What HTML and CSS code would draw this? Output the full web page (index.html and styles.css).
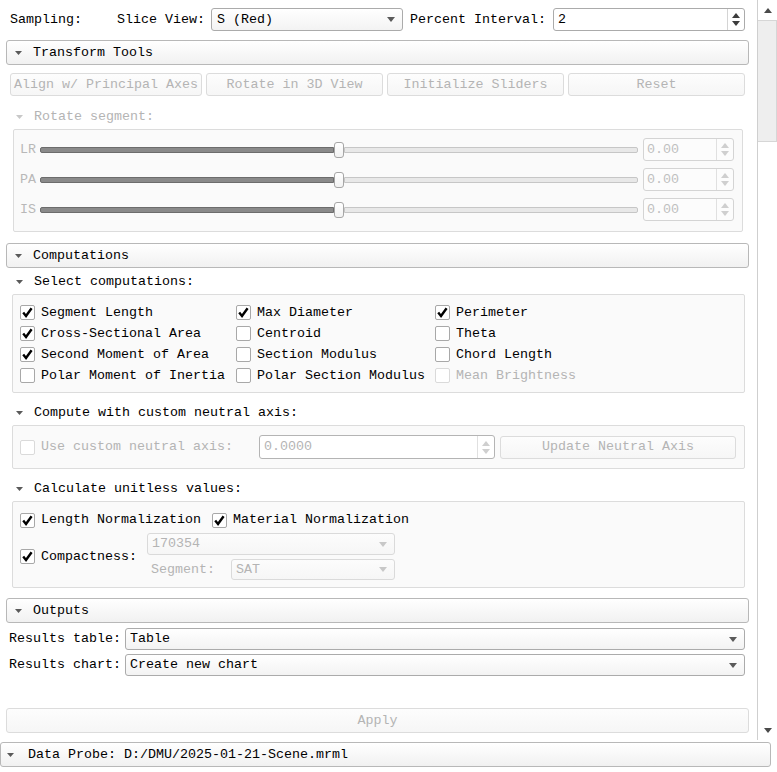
FILE: index.html
```html
<!DOCTYPE html>
<html lang="en">
<head>
    <meta charset="UTF-8">
    <title>Cross-Section Analysis</title>
    <link rel="stylesheet" href="styles.css">
</head>
<body>
    <div class="window">
        <div class="main">
            <div class="panel">
                <!-- Sampling row -->
                <div class="top-row">
                    <span class="sampling">Sampling:</span>
                    <span>Slice View:</span>
                    <div class="combo slice-combo">
                        <span>S (Red)</span>
                        <svg class="tri combo-arrow" width="8" height="5" viewBox="0 0 8 5"><path d="M0 0H8L4 5Z"/></svg>
                    </div>
                    <span class="interval-label">Percent Interval:</span>
                    <div class="spin interval-spin">
                        <span>2</span>
                        <div class="spin-buttons">
                            <svg width="8" height="5" viewBox="0 0 8 5"><path d="M0 5H8L4 0Z"/></svg>
                            <svg width="8" height="5" viewBox="0 0 8 5"><path d="M0 0H8L4 5Z"/></svg>
                        </div>
                    </div>
                </div>

                <!-- Transform Tools -->
                <div class="section-header">
                    <svg class="tri" width="7" height="4" viewBox="0 0 7 4"><path d="M0 0H7L3.5 4Z"/></svg>
                    <span>Transform Tools</span>
                </div>
                <div class="button-row">
                    <div class="button disabled first">Align w/ Principal Axes</div>
                    <div class="button disabled">Rotate in 3D View</div>
                    <div class="button disabled">Initialize Sliders</div>
                    <div class="button disabled">Reset</div>
                </div>
                <div class="sub-header disabled rotate-header">
                    <svg class="tri" width="7" height="4" viewBox="0 0 7 4"><path d="M0 0H7L3.5 4Z"/></svg>
                    <span>Rotate segment:</span>
                </div>
                <div class="group rotate-group">
                    <div class="slider-row">
                        <span class="slider-label">LR</span>
                        <div class="slider"><div class="fill"></div><div class="handle"></div><div class="rest"></div></div>
                        <div class="spin value-spin">
                            <span>0.00</span>
                            <div class="spin-buttons">
                                <svg width="8" height="5" viewBox="0 0 8 5"><path d="M0 5H8L4 0Z"/></svg>
                                <svg width="8" height="5" viewBox="0 0 8 5"><path d="M0 0H8L4 5Z"/></svg>
                            </div>
                        </div>
                    </div>
                    <div class="slider-row">
                        <span class="slider-label">PA</span>
                        <div class="slider"><div class="fill"></div><div class="handle"></div><div class="rest"></div></div>
                        <div class="spin value-spin">
                            <span>0.00</span>
                            <div class="spin-buttons">
                                <svg width="8" height="5" viewBox="0 0 8 5"><path d="M0 5H8L4 0Z"/></svg>
                                <svg width="8" height="5" viewBox="0 0 8 5"><path d="M0 0H8L4 5Z"/></svg>
                            </div>
                        </div>
                    </div>
                    <div class="slider-row">
                        <span class="slider-label">IS</span>
                        <div class="slider"><div class="fill"></div><div class="handle"></div><div class="rest"></div></div>
                        <div class="spin value-spin">
                            <span>0.00</span>
                            <div class="spin-buttons">
                                <svg width="8" height="5" viewBox="0 0 8 5"><path d="M0 5H8L4 0Z"/></svg>
                                <svg width="8" height="5" viewBox="0 0 8 5"><path d="M0 0H8L4 5Z"/></svg>
                            </div>
                        </div>
                    </div>
                </div>

                <!-- Computations -->
                <div class="section-header computations-header">
                    <svg class="tri" width="7" height="4" viewBox="0 0 7 4"><path d="M0 0H7L3.5 4Z"/></svg>
                    <span>Computations</span>
                </div>
                <div class="sub-header">
                    <svg class="tri" width="7" height="4" viewBox="0 0 7 4"><path d="M0 0H7L3.5 4Z"/></svg>
                    <span>Select computations:</span>
                </div>
                <div class="group wide-group check-grid">
                    <label class="check"><span class="box checked"></span>Segment Length</label>
                    <label class="check"><span class="box checked"></span>Max Diameter</label>
                    <label class="check"><span class="box checked"></span>Perimeter</label>
                    <label class="check"><span class="box checked"></span>Cross-Sectional Area</label>
                    <label class="check"><span class="box"></span>Centroid</label>
                    <label class="check"><span class="box"></span>Theta</label>
                    <label class="check"><span class="box checked"></span>Second Moment of Area</label>
                    <label class="check"><span class="box"></span>Section Modulus</label>
                    <label class="check"><span class="box"></span>Chord Length</label>
                    <label class="check"><span class="box"></span>Polar Moment of Inertia</label>
                    <label class="check"><span class="box"></span>Polar Section Modulus</label>
                    <label class="check disabled"><span class="box"></span>Mean Brightness</label>
                </div>

                <div class="sub-header">
                    <svg class="tri" width="7" height="4" viewBox="0 0 7 4"><path d="M0 0H7L3.5 4Z"/></svg>
                    <span>Compute with custom neutral axis:</span>
                </div>
                <div class="group wide-group axis-group">
                    <label class="check disabled axis-check"><span class="box"></span>Use custom neutral axis:</label>
                    <div class="spin axis-spin">
                        <span>0.0000</span>
                        <div class="spin-buttons">
                            <svg width="8" height="5" viewBox="0 0 8 5"><path d="M0 5H8L4 0Z"/></svg>
                            <svg width="8" height="5" viewBox="0 0 8 5"><path d="M0 0H8L4 5Z"/></svg>
                        </div>
                    </div>
                    <div class="button disabled axis-button">Update Neutral Axis</div>
                </div>

                <div class="sub-header">
                    <svg class="tri" width="7" height="4" viewBox="0 0 7 4"><path d="M0 0H7L3.5 4Z"/></svg>
                    <span>Calculate unitless values:</span>
                </div>
                <div class="group wide-group unitless-group">
                    <div class="norm-row">
                        <label class="check"><span class="box checked"></span>Length Normalization</label>
                        <label class="check"><span class="box checked"></span>Material Normalization</label>
                    </div>
                    <div class="compact-row">
                        <label class="check"><span class="box checked"></span>Compactness:</label>
                        <div class="compact-fields">
                            <div class="combo disabled volume-combo">
                                <span>170354</span>
                                <svg class="tri combo-arrow" width="8" height="5" viewBox="0 0 8 5"><path d="M0 0H8L4 5Z"/></svg>
                            </div>
                            <div class="segment-row">
                                <span class="segment-label">Segment:</span>
                                <div class="combo disabled segment-combo">
                                    <span>SAT</span>
                                    <svg class="tri combo-arrow" width="8" height="5" viewBox="0 0 8 5"><path d="M0 0H8L4 5Z"/></svg>
                                </div>
                            </div>
                        </div>
                    </div>
                </div>

                <!-- Outputs -->
                <div class="section-header outputs-header">
                    <svg class="tri" width="7" height="4" viewBox="0 0 7 4"><path d="M0 0H7L3.5 4Z"/></svg>
                    <span>Outputs</span>
                </div>
                <div class="output-row">
                    <span class="output-label">Results table:</span>
                    <div class="combo output-combo">
                        <span>Table</span>
                        <svg class="tri combo-arrow" width="8" height="5" viewBox="0 0 8 5"><path d="M0 0H8L4 5Z"/></svg>
                    </div>
                </div>
                <div class="output-row">
                    <span class="output-label">Results chart:</span>
                    <div class="combo output-combo">
                        <span>Create new chart</span>
                        <svg class="tri combo-arrow" width="8" height="5" viewBox="0 0 8 5"><path d="M0 0H8L4 5Z"/></svg>
                    </div>
                </div>

                <div class="button disabled apply">Apply</div>
            </div>

            <div class="scrollbar">
                <div class="scroll-arrow">
                    <svg width="8" height="5" viewBox="0 0 8 5"><path d="M0 5H8L4 0Z"/></svg>
                </div>
                <div class="thumb"></div>
                <div class="track"></div>
                <div class="scroll-arrow">
                    <svg width="8" height="5" viewBox="0 0 8 5"><path d="M0 0H8L4 5Z"/></svg>
                </div>
            </div>
        </div>

        <div class="section-header probe">
            <svg class="tri" width="7" height="4" viewBox="0 0 7 4"><path d="M0 0H7L3.5 4Z"/></svg>
            <span>Data Probe: D:/DMU/2025-01-21-Scene.mrml</span>
        </div>
    </div>
</body>
</html>
```

FILE: styles.css
```css
body {
    margin: 0;
    background-color: #ffffff;
    color: #000000;
    font-family: "Liberation Mono", "DejaVu Sans Mono", monospace;
    font-size: 13.33px;
    line-height: 16px;
}
.window {
    width: 777px;
    height: 772px;
    display: flex;
    flex-direction: column;
}
.main {
    display: flex;
    height: 740px;
}
.panel {
    width: 757px;
    padding: 0 8px 0 6px;
    box-sizing: border-box;
}

/* shared widgets */
.tri {
    fill: #5a5a5a;
    flex-shrink: 0;
}
.disabled {
    color: #b4b4b4;
}
.disabled .tri {
    fill: #c8c8c8;
}
.combo {
    display: flex;
    align-items: center;
    box-sizing: border-box;
    height: 23px;
    padding-left: 4px;
    border: 1px solid #ababab;
    border-radius: 3px;
    background: linear-gradient(#ffffff, #f3f3f3);
}
.combo-arrow {
    margin-left: auto;
    margin-right: 7px;
}
.combo.disabled {
    border-color: #dadada;
    background: linear-gradient(#fcfcfc, #f6f6f6);
}
.spin {
    display: flex;
    align-items: center;
    box-sizing: border-box;
    height: 23px;
    padding-left: 4px;
    border: 1px solid #ababab;
    border-radius: 3px;
    background-color: #ffffff;
}
.spin-buttons {
    margin-left: auto;
    width: 16px;
    align-self: stretch;
    border-left: 1px solid #d4d4d4;
    display: flex;
    flex-direction: column;
    justify-content: center;
    align-items: center;
    gap: 3px;
    fill: #3c3c3c;
}
.button {
    display: flex;
    align-items: center;
    justify-content: center;
    box-sizing: border-box;
    height: 23px;
    border: 1px solid #ababab;
    border-radius: 3px;
    background: linear-gradient(#ffffff, #f3f3f3);
}
.button.disabled {
    border-color: #dcdcdc;
    background: linear-gradient(#fdfdfd, #f6f6f6);
}
.section-header {
    display: flex;
    align-items: center;
    gap: 11px;
    box-sizing: border-box;
    height: 25px;
    padding-left: 8px;
    border: 1px solid #b8b8b8;
    border-radius: 3px;
    background: linear-gradient(#ffffff, #f1f1f1);
}
.sub-header {
    display: flex;
    align-items: center;
    gap: 11px;
    height: 16px;
    padding-left: 10px;
}
.group {
    box-sizing: border-box;
    border: 1px solid #dcdcdc;
    border-radius: 2px;
    background-color: #fafafa;
}
.wide-group {
    margin: 4px 4px 0 6px;
}
.check {
    display: flex;
    align-items: center;
    gap: 6px;
    white-space: nowrap;
}
.box {
    width: 15px;
    height: 15px;
    box-sizing: border-box;
    border: 1px solid #a8a8a8;
    border-radius: 2px;
    background-color: #ffffff;
    flex-shrink: 0;
}
.box.checked {
    background: #ffffff url("data:image/svg+xml,%3Csvg xmlns='http://www.w3.org/2000/svg' width='13' height='13' viewBox='0 0 13 13'%3E%3Cpath d='M2.2 6.6L5 10L10.6 2.2' fill='none' stroke='%23000' stroke-width='2.4'/%3E%3C/svg%3E") center no-repeat;
}
.check.disabled .box {
    border-color: #dadada;
}

/* sampling row */
.top-row {
    display: flex;
    align-items: center;
    gap: 6px;
    height: 23px;
    margin-top: 8px;
}
.sampling {
    margin-left: 4px;
    margin-right: 29px;
}
.slice-combo {
    width: 192px;
    padding-left: 5px;
}
.interval-label {
    margin-left: 1px;
    margin-right: 1px;
}
.interval-spin {
    width: 192px;
}

/* transform tools */
.top-row + .section-header {
    margin-top: 9px;
}
.button-row {
    display: flex;
    gap: 4px;
    padding: 0 4px;
    margin-top: 8px;
}
.button-row .button {
    flex: 1;
}
.button-row .first {
    flex: 0 0 192px;
}
.rotate-header {
    margin-top: 13px;
}
.rotate-group {
    margin: 4px 6px 0 7px;
    padding: 8px 8px 10px 6px;
    display: flex;
    flex-direction: column;
    gap: 7px;
}
.slider-row {
    display: flex;
    align-items: center;
    height: 23px;
}
.slider-label {
    width: 16px;
    color: #b8b8b8;
}
.slider {
    flex: 1;
    display: flex;
    align-items: center;
    height: 16px;
    margin: 0 5px 0 4px;
}
.fill {
    flex: 1;
    height: 4px;
    background-color: #8a8a8a;
    border: 1px solid #6c6c6c;
    border-radius: 2px 0 0 2px;
}
.rest {
    flex: 1;
    height: 4px;
    background-color: #e8e8e8;
    border: 1px solid #c6c6c6;
    border-radius: 0 2px 2px 0;
}
.handle {
    width: 10px;
    height: 16px;
    box-sizing: border-box;
    border: 1px solid #a6a6a6;
    border-radius: 3px;
    background: linear-gradient(#ffffff, #f2f2f2);
}
.value-spin {
    width: 91px;
    border-color: #d4d4d4;
    background-color: #fcfcfc;
    color: #c0c0c0;
    padding-left: 3px;
}
.value-spin .spin-buttons,
.axis-spin .spin-buttons {
    fill: #cfcfcf;
    border-left-color: #e0e0e0;
}

/* computations */
.computations-header {
    margin-top: 11px;
}
.computations-header + .sub-header {
    margin-top: 6px;
}
.check-grid {
    display: grid;
    grid-template-columns: 216px 199px 1fr;
    grid-auto-rows: 21px;
    align-items: center;
    padding: 7px 0 6px 7px;
}
.check-grid + .sub-header,
.axis-group + .sub-header {
    margin-top: 12px;
}
.axis-group {
    display: flex;
    align-items: center;
    height: 44px;
    padding: 0 8px 0 7px;
}
.axis-check {
    flex: 1;
}
.axis-spin {
    width: 236px;
    height: 24px;
    border-color: #b4b4b4;
    color: #b4b4b4;
}
.axis-button {
    width: 236px;
    margin-left: 5px;
}
.unitless-group {
    height: 87px;
    padding: 8px 0 0 7px;
}
.norm-row {
    display: flex;
    align-items: center;
    gap: 11px;
    height: 20px;
}
.compact-row {
    display: flex;
    align-items: center;
    margin-top: 3px;
}
.compact-fields {
    display: flex;
    flex-direction: column;
    gap: 4px;
    width: 248px;
    margin-left: 10px;
}
.volume-combo {
    height: 22px;
}
.segment-row {
    display: flex;
    align-items: center;
}
.segment-label {
    color: #b4b4b4;
    margin-left: 4px;
    width: 80px;
}
.segment-combo {
    flex: 1;
    height: 21px;
}

/* outputs */
.outputs-header {
    margin-top: 10px;
}
.output-row {
    display: flex;
    align-items: center;
    gap: 4px;
    margin-top: 4px;
    padding: 0 4px 0 3px;
}
.outputs-header + .output-row {
    margin-top: 5px;
}
.output-combo {
    flex: 1;
    height: 22px;
}
.apply {
    height: 25px;
    margin-top: 32px;
}

/* scrollbar */
.scrollbar {
    width: 20px;
    box-sizing: border-box;
    border-left: 1px solid #cfcfcf;
    display: flex;
    flex-direction: column;
}
.scroll-arrow {
    height: 20px;
    display: flex;
    align-items: center;
    justify-content: center;
    fill: #4a4a4a;
}
.thumb {
    height: 122px;
    box-sizing: border-box;
    border: 1px solid #d6d6d6;
    border-left: none;
    background-color: #eeeeee;
}
.track {
    flex: 1;
}

/* data probe */
.probe {
    width: 771px;
    margin-top: 2px;
    padding-left: 6px;
    gap: 14px;
}
```
